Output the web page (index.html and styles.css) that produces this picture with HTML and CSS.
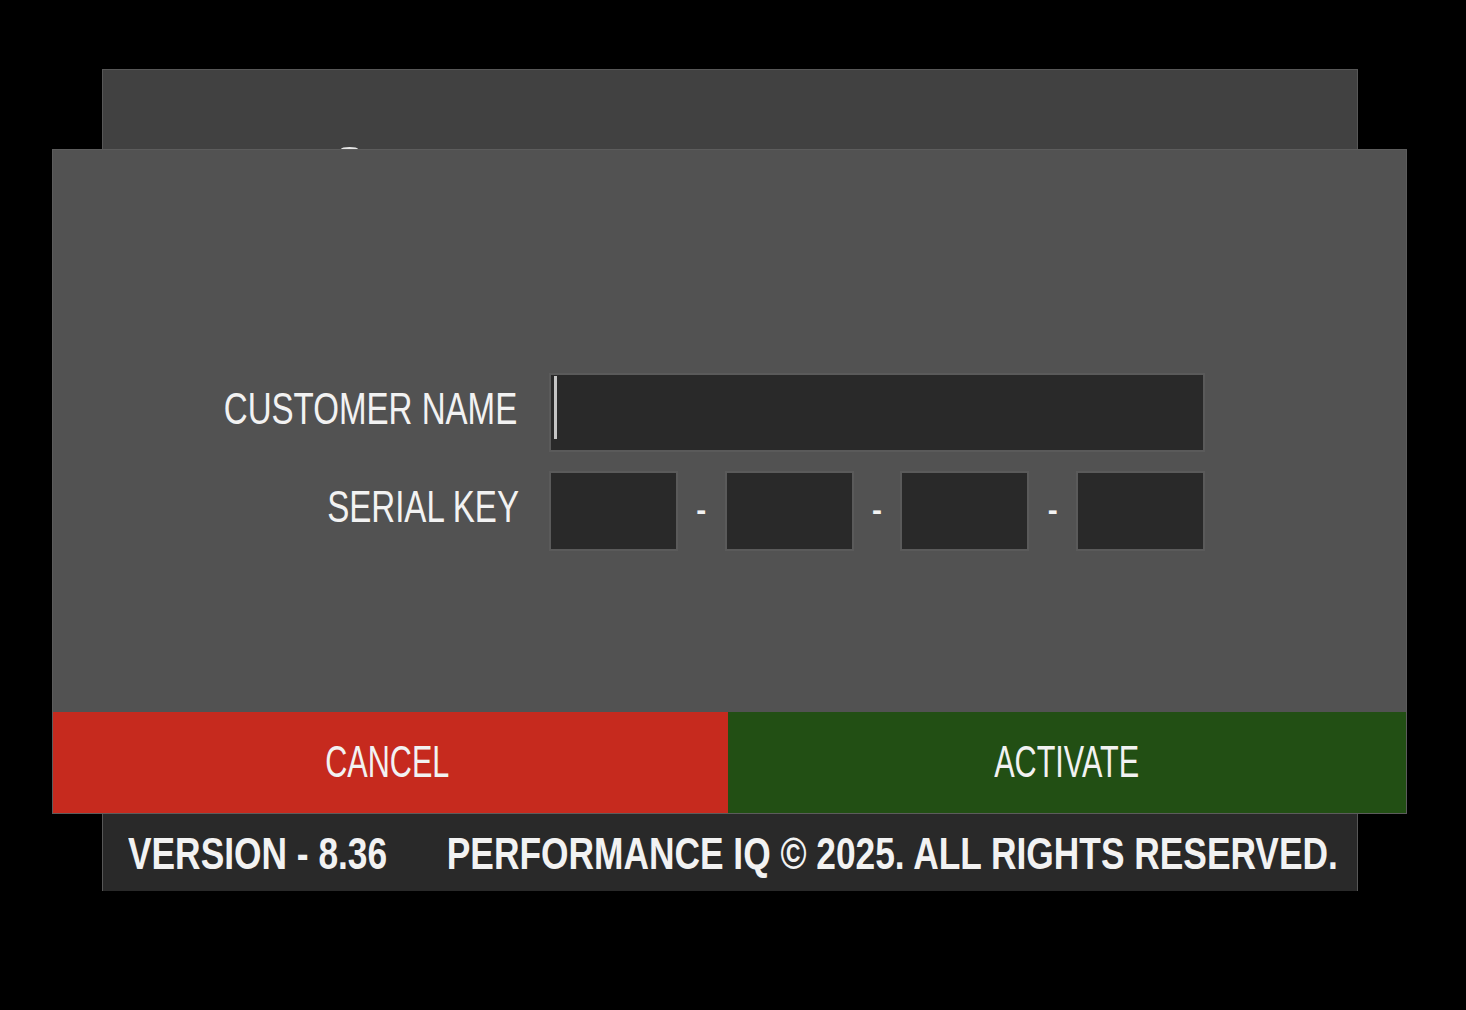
FILE: index.html
```html
<!DOCTYPE html>
<html lang="en">
<head>
    <meta charset="UTF-8">
    <meta name="viewport" content="width=device-width, initial-scale=1.0">
    <title>Activate - Performance IQ</title>
    <link rel="stylesheet" href="styles.css">
</head>
<body>

    <div class="panel">
        <div class="panel-top">
            <span class="peek"></span>
        </div>

        <form class="dialog" action="#" method="post">
            <div class="dialog-body">
                <label class="label" for="customer"><span class="narrow">CUSTOMER NAME</span></label>
                <div class="field field-wide">
                    <span class="caret"></span>
                    <input type="text" id="customer" name="customer">
                </div>

                <label class="label" for="key1"><span class="narrow">SERIAL KEY</span></label>
                <div class="serial">
                    <div class="field"><input type="text" id="key1" name="key1" maxlength="4"></div>
                    <span class="dash">-</span>
                    <div class="field"><input type="text" id="key2" name="key2" maxlength="4"></div>
                    <span class="dash">-</span>
                    <div class="field"><input type="text" id="key3" name="key3" maxlength="4"></div>
                    <span class="dash">-</span>
                    <div class="field"><input type="text" id="key4" name="key4" maxlength="4"></div>
                </div>
            </div>

            <div class="actions">
                <button type="button" class="btn btn-cancel"><span class="narrow">CANCEL</span></button>
                <button type="submit" class="btn btn-activate"><span class="narrow">ACTIVATE</span></button>
            </div>
        </form>

        <div class="footer">
            <div class="footer-text">
                <span>VERSION - 8.36</span>
                <span>PERFORMANCE IQ &copy; 2025. ALL RIGHTS RESERVED.</span>
            </div>
        </div>
    </div>

</body>
</html>
```

FILE: styles.css
```css
body {
    margin: 0;
    background: #000;
    font-family: "Liberation Sans", Arial, sans-serif;
    color: #f2f2f2;
}

/* no condensed face installed, so squeeze the regular one */
.narrow {
    display: inline-block;
    white-space: nowrap;
}

/* back window */
.panel {
    width: 1254px;
    margin: 70px 0 0 103px;
    background: #414141;
    box-shadow: 0 0 0 1px #575757;
    display: flex;
    flex-direction: column;
}
.panel-top {
    height: 80px;
    position: relative;
}
.peek {
    position: absolute;
    left: 238px;
    top: 77px;
    width: 17px;
    height: 4px;
    border-radius: 50%;
    background: #e6e6e6;
}

/* activation dialog, wider than the window behind it */
.dialog {
    margin: 0 -49px 0 -50px;
    background: #525252;
    box-shadow: 0 0 0 1px #5c5c5c;
    display: flex;
    flex-direction: column;
    position: relative;
}
.dialog-body {
    height: 562px;
    box-sizing: border-box;
    padding-top: 223px;
    display: grid;
    grid-template-columns: 466px 656px;
    grid-auto-rows: 79px;
    column-gap: 30px;
    row-gap: 19px;
    align-content: start;
}
.label {
    justify-self: end;
    align-self: center;
    font-size: 45px;
    margin-top: -8px;
}
.label .narrow {
    transform: scaleX(0.735);
    transform-origin: right center;
}
.label:first-child {
    margin-right: 2px;
}
.field {
    background: #292929;
    border: 2px solid #5a5a5a;
    box-sizing: border-box;
    width: 129px;
    height: 80px;
    display: flex;
    align-items: center;
}
.field-wide {
    width: 656px;
    height: 79px;
}
.field input {
    flex: 1;
    min-width: 0;
    height: 100%;
    border: none;
    background: transparent;
    outline: none;
    padding: 0;
}
.caret {
    width: 3px;
    height: 63px;
    margin: 0 0 10px 3px;
    background: #c4c4c4;
}
.serial {
    display: flex;
    justify-content: space-between;
    align-items: center;
}
.dash {
    font-size: 30px;
    font-weight: bold;
    margin-top: -2px;
}

.actions {
    display: flex;
    height: 101px;
}
.btn {
    border: none;
    color: #f2f2f2;
    font-family: inherit;
    font-size: 45px;
    cursor: pointer;
    padding: 0 0 2px 0;
}
.btn .narrow {
    transform: scaleX(0.68);
}
.btn-cancel {
    width: 675px;
    background: #c62a1e;
    padding-right: 6px;
}
.btn-activate {
    flex: 1;
    background: #224f14;
}

.footer {
    background: #292929;
    height: 78px;
    display: flex;
    align-items: center;
    padding: 3px 0 0 25px;
    box-sizing: border-box;
    font-size: 45px;
    font-weight: bold;
}
.footer-text {
    display: flex;
    gap: 76px;
    white-space: nowrap;
    transform: scaleX(0.785);
    transform-origin: left center;
}
```
